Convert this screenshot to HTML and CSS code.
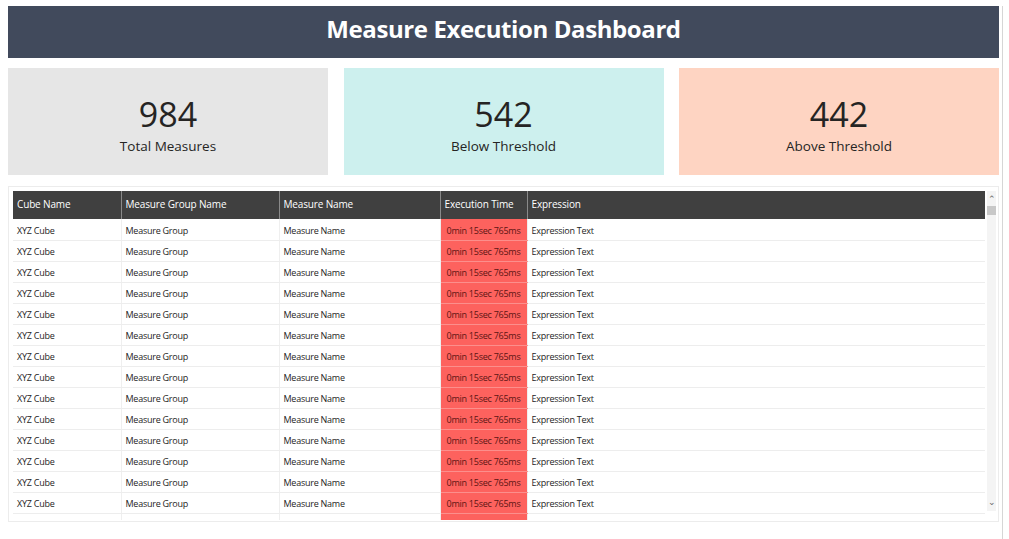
FILE: index.html
```html
<!DOCTYPE html>
<html>
<head>
<meta charset="utf-8">
<link rel="stylesheet" href="styles.css">
</head>
<body>
<div class="page">
  <header class="title-bar"><h1>Measure Execution Dashboard</h1></header>
  <section class="cards">
    <div class="card card-total"><div class="num">984</div><div class="lbl">Total Measures</div></div>
    <div class="card card-below"><div class="num">542</div><div class="lbl">Below Threshold</div></div>
    <div class="card card-above"><div class="num">442</div><div class="lbl">Above Threshold</div></div>
  </section>
  <section class="table-box">
    <div class="table-wrap">
      <table class="grid">
        <thead>
          <tr><th class="c1">Cube Name</th><th class="c2">Measure Group Name</th><th class="c3">Measure Name</th><th class="c4">Execution Time</th><th class="c5">Expression</th></tr>
        </thead>
        <tbody>
          <tr><td>XYZ Cube</td><td>Measure Group</td><td>Measure Name</td><td class="hot">0min 15sec 765ms</td><td>Expression Text</td></tr>
          <tr><td>XYZ Cube</td><td>Measure Group</td><td>Measure Name</td><td class="hot">0min 15sec 765ms</td><td>Expression Text</td></tr>
          <tr><td>XYZ Cube</td><td>Measure Group</td><td>Measure Name</td><td class="hot">0min 15sec 765ms</td><td>Expression Text</td></tr>
          <tr><td>XYZ Cube</td><td>Measure Group</td><td>Measure Name</td><td class="hot">0min 15sec 765ms</td><td>Expression Text</td></tr>
          <tr><td>XYZ Cube</td><td>Measure Group</td><td>Measure Name</td><td class="hot">0min 15sec 765ms</td><td>Expression Text</td></tr>
          <tr><td>XYZ Cube</td><td>Measure Group</td><td>Measure Name</td><td class="hot">0min 15sec 765ms</td><td>Expression Text</td></tr>
          <tr><td>XYZ Cube</td><td>Measure Group</td><td>Measure Name</td><td class="hot">0min 15sec 765ms</td><td>Expression Text</td></tr>
          <tr><td>XYZ Cube</td><td>Measure Group</td><td>Measure Name</td><td class="hot">0min 15sec 765ms</td><td>Expression Text</td></tr>
          <tr><td>XYZ Cube</td><td>Measure Group</td><td>Measure Name</td><td class="hot">0min 15sec 765ms</td><td>Expression Text</td></tr>
          <tr><td>XYZ Cube</td><td>Measure Group</td><td>Measure Name</td><td class="hot">0min 15sec 765ms</td><td>Expression Text</td></tr>
          <tr><td>XYZ Cube</td><td>Measure Group</td><td>Measure Name</td><td class="hot">0min 15sec 765ms</td><td>Expression Text</td></tr>
          <tr><td>XYZ Cube</td><td>Measure Group</td><td>Measure Name</td><td class="hot">0min 15sec 765ms</td><td>Expression Text</td></tr>
          <tr><td>XYZ Cube</td><td>Measure Group</td><td>Measure Name</td><td class="hot">0min 15sec 765ms</td><td>Expression Text</td></tr>
          <tr><td>XYZ Cube</td><td>Measure Group</td><td>Measure Name</td><td class="hot">0min 15sec 765ms</td><td>Expression Text</td></tr>
          <tr class="partial"><td></td><td></td><td></td><td class="hot"></td><td></td></tr>
        </tbody>
      </table>
    </div>
    <div class="scrollbar">
      <span class="arrow">&#8963;</span>
      <span class="track"><span class="thumb"></span></span>
      <span class="arrow down">&#8964;</span>
    </div>
  </section>
</div>
<div class="edge"></div>
</body>
</html>
```

FILE: styles.css
```css
html, body {
  margin: 0;
  padding: 0;
  background: #ffffff;
}
body {
  font-family: "Open Sans", "Noto Sans", "Liberation Sans", sans-serif;
  color: #252423;
  width: 1009px;
  height: 539px;
  overflow: hidden;
  position: relative;
}
.page {
  padding: 6px 10px 0 8px;
  display: flex;
  flex-direction: column;
}
.title-bar {
  height: 52px;
  background: #414a5c;
  display: flex;
  align-items: center;
  justify-content: center;
}
.title-bar h1 {
  margin: 0 0 8px 0;
  color: #ffffff;
  font-size: 24px;
  font-weight: 700;
  letter-spacing: -0.4px;
}
.cards {
  margin-top: 10px;
  display: grid;
  grid-template-columns: 320px 320px 320px;
  column-gap: 15.5px;
}
.card {
  height: 107px;
  display: flex;
  flex-direction: column;
  align-items: center;
  justify-content: center;
}
.card-total { background: #e6e6e6; }
.card-below { background: #cdf0ee; }
.card-above { background: #fed4c2; }
.num {
  font-size: 34px;
  line-height: 40px;
  font-weight: 400;
  color: #252423;
  margin-top: 6px;
}
.lbl {
  font-size: 13.5px;
  line-height: 18px;
  margin-top: 3px;
  color: #252423;
}
.table-box {
  margin-top: 11px;
  height: 336px;
  border: 1px solid #ececec;
  box-sizing: border-box;
  padding: 4px 2px 0 4px;
  display: flex;
}
.table-wrap {
  width: 974px;
  height: 329px;
  overflow: hidden;
}
.grid {
  border-collapse: collapse;
  table-layout: fixed;
  width: 974px;
  font-size: 9px;
  letter-spacing: -0.25px;
}
.grid th {
  background: #404040;
  color: #ffffff;
  font-weight: 400;
  font-size: 10px;
  letter-spacing: -0.15px;
  text-align: left;
  height: 28px;
  padding: 0 4px 3px 4px;
  box-sizing: border-box;
  border-left: 1px solid #8a8a8a;
  white-space: nowrap;
}
.grid th:first-child { border-left: none; }
.grid th.c5 { border-right: 2px solid #8a8a8a; }
.c1 { width: 108px; }
.c2 { width: 158px; }
.c3 { width: 161px; }
.c4 { width: 87px; }
.grid td {
  height: 21px;
  padding: 2px 4px 0 4px;
  box-sizing: border-box;
  border-bottom: 1px solid #ededed;
  border-left: 1px solid #efefef;
  white-space: nowrap;
  color: #252423;
}
.grid td:first-child { border-left: none; }
.grid td.hot {
  background: #fd625e;
  color: #5b1513;
  border-bottom: 1px solid #fc8f8c;
  padding-left: 6px;
}
.scrollbar {
  width: 9px;
  margin-left: 2px;
  height: 320px;
  display: flex;
  flex-direction: column;
  align-items: center;
  background: #f4f4f4;
}
.arrow {
  font-size: 9px;
  line-height: 10px;
  height: 12px;
  color: #666;
  padding-top: 3px;
}
.arrow.down { padding-top: 0; height: 14px; }
.track {
  flex: 1;
  width: 9px;
  display: flex;
  flex-direction: column;
}
.thumb {
  height: 9px;
  width: 9px;
  background: #c8c8c8;
}
.edge {
  position: absolute;
  left: 1002px;
  top: 6px;
  width: 1px;
  height: 533px;
  background: #d6d6d6;
}
```
